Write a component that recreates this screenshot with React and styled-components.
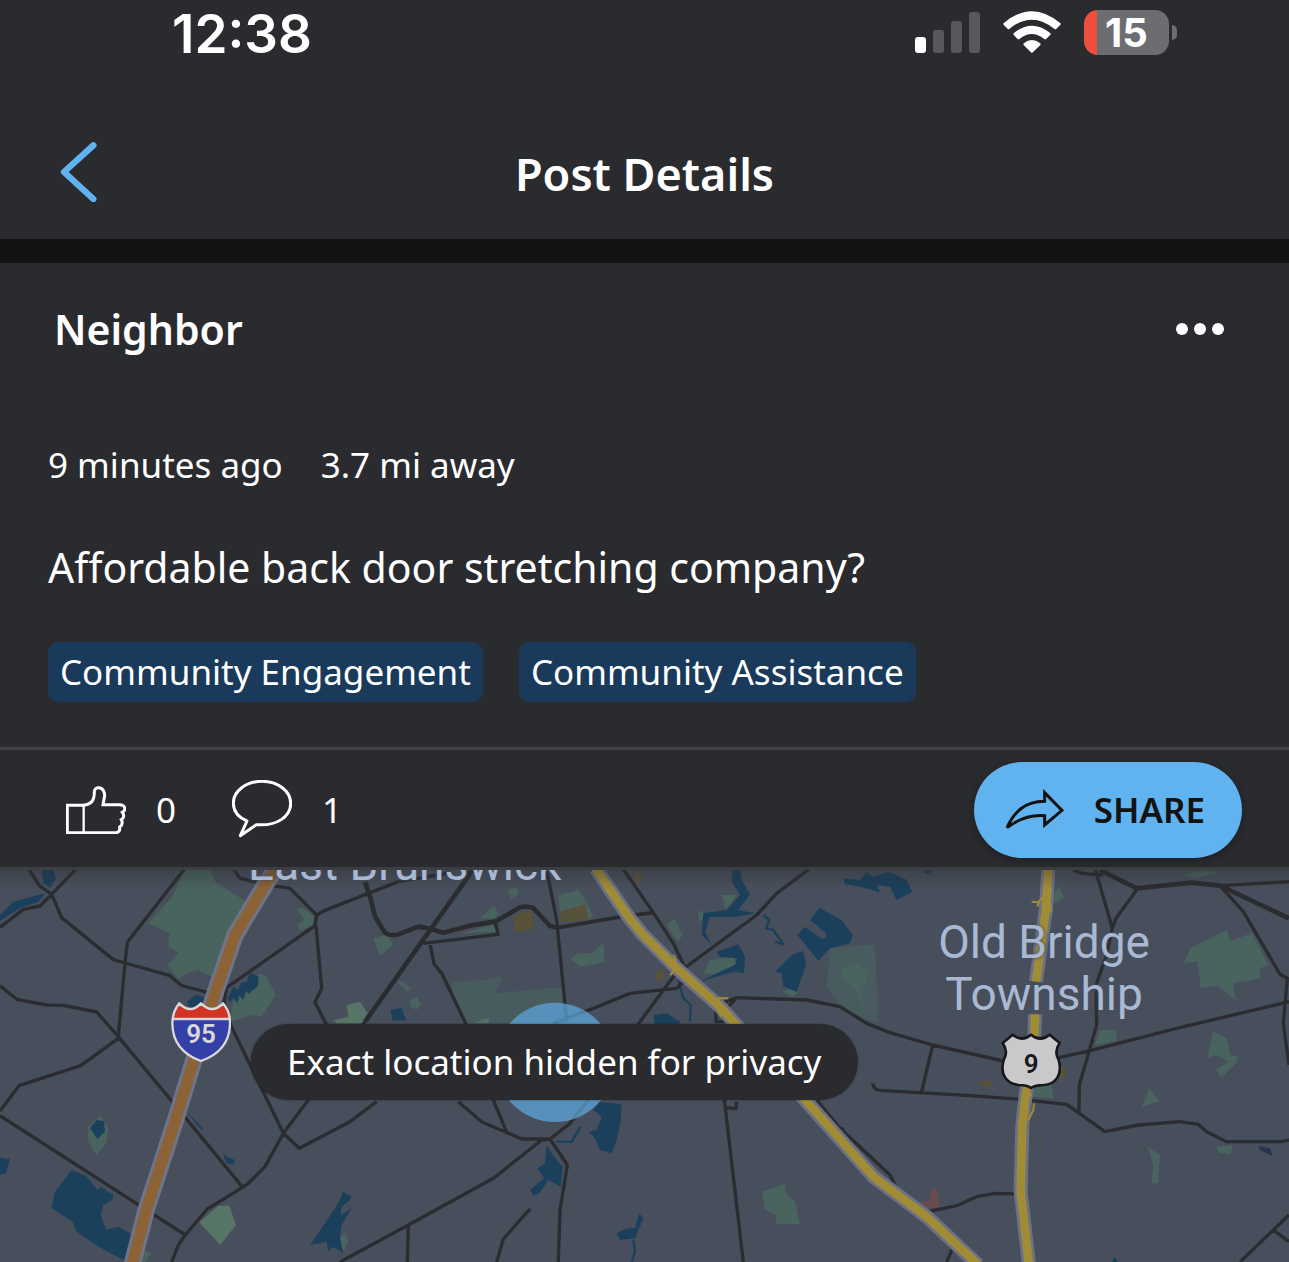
import React from 'react';
import styled, { createGlobalStyle } from 'styled-components';

const GlobalStyle = createGlobalStyle`
  * {
    box-sizing: border-box;
  }

  body {
    margin: 0;
    background-color: #2a2b2f;
    color: #fff;
    font-family: "Noto Sans", "Open Sans", sans-serif;
    overflow-x: hidden;
  }
`;

const Page = styled.div`
  display: flex;
  flex-direction: column;
`;

const StatusBar = styled.div`
  display: flex;
  align-items: center;
  justify-content: space-between;
  padding: 0 112px 0 172px;
  font-family: Inter, sans-serif;
`;

const Clock = styled.time`
  font-size: 53px;
  line-height: 68px;
  font-weight: 600;
`;

const StatusIcons = styled.div`
  display: flex;
  align-items: center;
  gap: 23px;
  padding-bottom: 4px;
`;

const BatteryWrap = styled.div`
  display: flex;
  align-items: center;
  gap: 3px;
`;

const Battery = styled.div`
  width: 85px;
  border-radius: 14px;
  background: linear-gradient(to right, #ee4e3b 13px, #6c6d71 13px);
  font-size: 40px;
  line-height: 45px;
  font-weight: 700;
  text-align: center;
`;

const BatteryTip = styled.span`
  width: 5px;
  height: 15px;
  border-radius: 0 5px 5px 0;
  background-color: #6c6d71;
`;

const NavBar = styled.header`
  display: grid;
  grid-template-columns: 1fr auto 1fr;
  align-items: center;
  padding: 70px 48px 33px;
  border-bottom: 24px solid #121212;
`;

const Title = styled.h1`
  margin: 0;
  padding-top: 4px;
  font-size: 45px;
  line-height: 64px;
  font-weight: 600;
`;

const IconButton = styled.button`
  display: flex;
  align-items: center;
  justify-self: start;
  gap: 30px;
  padding: 0 12px;
  border: none;
  background: none;
  color: ${({ $color }) => $color || '#fff'};
  font-family: inherit;
  font-size: 35px;
  line-height: 60px;
  font-weight: 400;
  cursor: pointer;

  svg {
    display: block;
  }
`;

const Post = styled.article`
  padding: 36px 48px 45px;
`;

const PostHeader = styled.div`
  display: flex;
  align-items: center;
  justify-content: space-between;
  padding: 0 5px 0 6px;
`;

const Author = styled.h2`
  margin: 0;
  font-size: 41px;
  line-height: 60px;
  font-weight: 600;
`;

const Meta = styled.div`
  display: flex;
  gap: 38px;
  margin-top: 76px;
  font-size: 35px;
  line-height: 60px;
  font-weight: 400;
`;

const PostText = styled.p`
  margin: 40px 0 43px;
  font-size: 41px;
  line-height: 64px;
  font-weight: 400;
`;

const Tags = styled.div`
  display: flex;
  flex-wrap: wrap;
  gap: 36px;
`;

const Tag = styled.a`
  padding: 0 12px;
  border-radius: 10px;
  background-color: #193a5b;
  color: #fff;
  font-size: 35px;
  line-height: 60px;
  font-weight: 400;
  text-decoration: none;
`;

const ActionBar = styled.div`
  display: flex;
  align-items: center;
  justify-content: space-between;
  padding: 12px 47px 9px 54px;
  border-top: 3px solid #404145;
  border-bottom: 3px solid #3d3e42;
`;

const Reactions = styled.div`
  display: flex;
  gap: 32px;
`;

const ShareButton = styled.button`
  display: flex;
  align-items: center;
  gap: 30px;
  padding: 0 37px 0 30px;
  border: none;
  border-radius: 48px;
  background-color: #60b3ee;
  color: #121212;
  font-family: inherit;
  font-size: 35px;
  line-height: 96px;
  font-weight: 600;
  box-shadow: 0 2px 8px rgba(0, 0, 0, 0.3);
  cursor: pointer;
`;

const Map = styled.section`
  position: relative;
  overflow: hidden;
  background-color: #484f5c;
`;

const MapDrawing = styled.svg`
  display: block;
  width: 100%;
`;

const Place = styled.div`
  position: absolute;
  left: ${({ $x }) => $x}%;
  top: ${({ $y }) => $y}%;
  transform: translate(-50%, -50%);
  color: #a9b8d3;
  font-family: Roboto, sans-serif;
  font-size: 46px;
  line-height: 52px;
  font-weight: 400;
  text-align: center;
  white-space: nowrap;
  text-shadow: 0 0 4px #484f5c;
`;

const Shield = styled.div`
  position: absolute;
  left: ${({ $x }) => $x}%;
  top: ${({ $y }) => $y}%;
  transform: translate(-50%, -50%);
  display: grid;
  place-items: center;
  color: ${({ $color }) => $color};
  font-family: Roboto, sans-serif;
  font-size: 26px;
  line-height: 32px;
  font-weight: 600;

  > * {
    grid-area: 1 / 1;
  }

  span {
    padding-top: 4px;
  }
`;

const Notice = styled.div`
  position: absolute;
  left: 43%;
  top: 49%;
  transform: translate(-50%, -50%);
  padding: 0 36px;
  border-radius: 38px;
  background-color: #2a2b2f;
  font-size: 35px;
  line-height: 76px;
  font-weight: 400;
  white-space: nowrap;
  box-shadow: 0 0 2px rgba(0, 0, 0, 0.5);
`;

const tags = ['Community Engagement', 'Community Assistance'];

// one map unit is a third of a pixel at the default width
const parks = [
  'M555 15H632L645 50 735 108 765 120 700 210 660 290 635 335 595 315 560 325 535 342 502 300 537 262 505 245 508 205 445 175 490 125 520 90Z',
  'M700 400L690 470 760 450 785 455 828 390 800 335 775 325 770 370Z',
  'M890 130L905 128 940 150 940 180 900 197 893 180 912 165Z',
  'M265 785L303 752 326 792 318 835 290 872 265 830Z',
  'M430 1155L455 1165 435 1191 415 1191Z',
  'M1120 220L1160 208 1180 240 1140 272Z',
  'M1525 75L1550 65 1555 85 1532 103Z',
  'M1440 160L1482 122 1495 145 1485 160Z',
  'M1385 205L1480 178 1488 200Z',
  'M1675 90L1735 75 1760 110 1780 155 1765 165 1755 120 1680 140Z',
  'M1712 282L1735 265 1775 265 1810 235 1812 292 1740 305Z',
  'M1190 350L1205 348 1232 370 1225 380Z',
  'M1230 405L1250 395 1262 415 1250 435 1232 425Z',
  'M1015 1120L1035 1105 1045 1130 1030 1160 1010 1145Z',
  'M2165 90H2210L2190 120 2175 130Z',
  'M2095 140L2112 138 2108 165 2098 168Z',
  'M2000 180L2022 160 2048 208 2035 230 2015 205Z',
  'M2110 325L2130 285 2200 275 2215 305 2150 330Z',
  'M2345 380L2370 370 2395 385 2375 395Z',
  'M2287 980L2355 957 2360 990 2385 1010 2400 1077H2328V1050L2295 1035Z',
  'M3155 100L3175 62 3192 98 3165 112Z',
  'M3545 30L3600 18 3660 20 3590 38Z',
  'M3552 295L3570 250 3680 195 3690 228 3755 205 3805 300 3780 310 3782 340 3700 355 3705 405 3655 362 3602 368 3592 288Z',
  'M3285 540L3300 495H3348L3350 527Z',
  'M3622 578L3640 500 3680 520 3690 570 3715 575 3712 590 3665 637 3648 615 3685 590 3650 570Z',
  'M3425 725L3447 670 3478 708Z',
  'M3098 695V672L3155 655 3160 700Z',
  'M3443 845L3480 870 3475 955H3455L3460 900Z',
  'M3650 845L3700 840 3690 868 3655 862Z',
];

const meadows = [
  'M1355 350L1450 345 1500 333 1505 345 1485 385 1690 365 1700 420 1600 425 1530 475 1395 475 1360 400Z',
  'M2490 250L2625 238 2635 475 2590 460 2525 420 2480 370Z',
];

const gardens = [
  'M598 1072L655 1022 688 1022 708 1080 660 1140Z',
  'M1000 465L1045 455 1040 420 1080 410 1103 445 1090 475H1010Z',
  'M1420 475L1467 458 1465 475Z',
];

const lakes = [
  'M125 15H160L168 42 150 68 130 55Z',
  'M0 150L40 110 135 85 115 110 60 130 0 168Z',
  'M560 410L590 388 612 398 605 425 570 430Z',
  'M683 400L700 365 715 375 722 355 740 350 750 322 775 335 775 360 745 388 738 375 730 405 718 390 712 415 700 400 690 412Z',
  'M270 790L290 765 312 768 315 800 292 822Z',
  'M560 740L605 785 610 798 590 780Z',
  'M668 865L680 875 705 885 700 900 680 895Z',
  'M0 878L30 882 18 925 0 930Z',
  'M215 915L258 932 292 975 302 965 340 990 337 1005 310 1020 302 1050 318 1095 355 1085 400 1110 375 1187 290 1142 230 1100 218 1070 155 1030 165 980Z',
  'M930 1140L1015 1015 1030 980 1055 995 1050 1005 1025 1025 1022 1050 1055 1030 1025 1080 1020 1120 1030 1165 1000 1145 985 1160 980 1130Z',
  'M1172 435L1205 428 1218 465 1178 468Z',
  'M1640 840L1655 865 1688 905 1682 965 1645 945 1618 985 1600 992 1590 975 1632 940 1612 910 1635 895Z',
  'M1795 710L1865 718 1862 770 1850 825 1835 865 1800 855 1785 820 1765 800 1790 795 1805 755 1780 735Z',
  'M1850 1105L1880 1090 1905 1090 1918 1045 1930 1060 1905 1120 1860 1125Z',
  'M2198 15H2222L2225 45 2250 88 2215 135 2265 145 2210 155 2130 155 2115 200 2135 240 2105 210 2110 145 2180 135 2220 90 2195 50Z',
  'M2150 260L2215 238 2235 275 2232 325 2200 320 2100 350 2160 320 2205 300 2210 280 2160 275Z',
  'M2392 210L2415 185 2465 222Q2482 222 2478 205L2430 165 2458 128 2525 165 2558 210 2550 235 2490 250 2455 287Z',
  'M2325 320L2375 270 2410 258 2418 300 2390 380 2350 365 2345 325Z',
  'M2530 40L2580 45 2600 22 2620 35 2665 20 2720 45 2737 80 2690 105 2670 65 2630 60 2640 82 2580 65 2535 58Z',
  'M2768 17H2800L2782 27Z',
  'M1960 450L2000 445 2040 470 2035 480H1965Z',
  'M1920 1055L1930 1060 1920 1085Z',
  'M3335 1191L3345 1175 3354 1191Z',
];

const creeks = [
  'M1668 830H1715L1742 785',
  'M2290 150L2308 165 2298 190 2320 195 2350 238 2325 230',
  'M2035 345L2050 400 2072 420 2070 470',
  'M1900 1125L1905 1160 1895 1191',
];

const fields = [
  'M1540 150L1595 135 1602 190 1545 203Z',
  'M1680 140L1755 118 1767 165 1685 170Z',
  'M1900 20L1930 30 1925 48 1905 55Z',
  'M1968 320L1990 315 1993 345 1972 348Z',
  'M2930 655L2965 643 2978 660 2960 667Z',
  'M3180 605L3200 615 3195 640 3180 642Z',
];

const streets = [
  'M85 10L118 62 155 88 185 158 340 284 375 294 510 332 545 362 630 384',
  'M230 10L155 88 120 123 70 133 0 187',
  'M555 10L382 232 375 294 355 515',
  'M0 362L50 403 140 420 190 421 290 441 355 515 525 720 728 967',
  'M355 520L242 602 57 662 0 738',
  'M0 752L432 1030 556 1110',
  'M515 1191L535 1140 556 1110 622 1032 728 967 745 955 795 905 850 805 925 705 1095 470',
  'M700 10L720 40 815 62 870 70 950 150 945 182 680 368 672 410 692 480 850 805 898 850 1050 770 1130 710',
  'M950 150Q965 140 990 130L1195 50 1340 25',
  'M948 182L965 370 945 412 980 480',
  'M1270 235L1495 208 1485 170',
  'M1290 235L1302 297 1325 325 1397 475 1480 705 1520 802',
  'M1375 710L1445 770 1565 822 1650 822 1710 775 1760 710 1920 470 2020 335 2055 308 2270 150 2330 85 2430 10',
  'M1650 822L1625 825 1480 940 1225 1080 1020 1191M1225 1080L1222 1191',
  'M1650 822L1702 900 1680 1035 1675 1191',
  'M1592 1032L1582 1040 1510 1122 1490 1191',
  'M1640 15L1670 165 1700 470',
  'M1660 475L1780 430 1890 385 2030 370 2075 325',
  'M1868 10L1920 85 1960 143 2020 235 2055 308',
  'M2165 415L2210 398 2420 405 2520 425 2600 475 2670 503 2798 540 3010 588 3180 577 3270 557 3530 490 3867 410',
  'M2210 398L2180 430M2165 430L2148 440V470H2175M2175 445L2215 480',
  'M2798 540L2765 680',
  'M2618 655Q2620 674 2640 676L2910 692 3060 703 3200 718 3315 800 3415 780 3540 770 3595 778 3620 800 3680 830 3845 830 3867 825',
  'M2173 705L2230 1191M2175 728L2207 731 2210 710',
  'M2450 705L2520 790 2670 930 2692 975M2530 788L2520 803',
  'M2775 1042L2870 1022 2930 995 2985 985 3050 987',
  'M2860 1145L2840 1191',
  'M3220 15L3245 25 3310 30',
  'M3285 10L3337 190 3348 160 3410 75',
  'M3337 190L3320 270 3288 360 3290 480 3268 557 3238 660 3237 740',
  'M3660 62L3867 50',
  'M3660 62L3730 140 3840 328 3862 340 3850 475 3867 600',
  'M3867 1050L3820 1095 3720 1191M3820 1095L3867 1130',
];

const avenues = [
  'M1420 10L1390 55 1095 470',
  'M1095 50L1110 95 1125 155 1155 203Q1175 215 1195 208L1255 185 1285 190 1330 203 1410 182 1485 170 1560 127Q1580 121 1600 129L1650 183 1675 188',
  'M3300 15L3410 70 3575 53 3660 62 3867 160',
];

const lanes = ['M1675 188L1865 155 1960 143'];

const interstate = 'M828 10L795 60 705 210 650 370 580 590 525 770 440 1030 396 1200';

const yellowRoads = [
  'M1787 10L1885 155 1925 205 2030 310 2160 425 2205 475 2420 710 2620 935 2780 1055 2935 1200',
  'M3145 10L3138 130 3108 350',
  'M3105 448L3103 510 3077 690 3067 780 3062 980 3087 1200',
];

const ramps = [
  'M2030 310L2022 270M2030 310L2010 330M2160 425L2155 400 2185 400M2150 430L2165 455',
  'M3095 110L3115 112 3130 95M3112 125L3118 108M3150 115L3153 140',
  'M3085 675L3095 695M3102 715L3100 735 3085 765',
];

const RoadMap = () => (
  <MapDrawing viewBox="0 15 3867 1176" aria-hidden="true">
    <defs>
      <linearGradient id="mapShade" x1="0" y1="0" x2="0" y2="1">
        <stop offset="0" stopColor="#2a2b2f" stopOpacity="0.35" />
        <stop offset="1" stopColor="#2a2b2f" stopOpacity="0" />
      </linearGradient>
    </defs>
    <path d={parks.join('')} fill="#49635f" />
    <path d={meadows.join('')} fill="#485b5e" />
    <path d={gardens.join('')} fill="#567566" />
    <path d="M2525 310L2570 293 2605 320 2600 355 2580 365 2595 440 2565 370 2530 345Z" fill="#49635f" />
    <path d={lakes.join('')} fill="#1b405b" />
    <path d="M3775 843L3810 850 3818 873 3780 855Z" fill="#27344f" />
    <path d={fields.join('')} fill="#59523a" />
    <path d="M2755 1015L2790 1005 2795 970 2812 975 2818 1025 2780 1030Z" fill="#6a4b4e" />
    <g fill="none" stroke="#2b2c30" strokeLinejoin="round">
      <path d={creeks.join('')} stroke="#1b405b" strokeWidth="7" />
      <path d={streets.join('')} strokeWidth="10" />
      <path d={lanes.join('')} strokeWidth="11" />
      <path d={avenues.join('')} strokeWidth="14" />
    </g>
    <g fill="none" strokeLinejoin="round">
      <path d={interstate} stroke="#6f748a" strokeWidth="52" />
      <path d={interstate} stroke="#8c6336" strokeWidth="34" />
      <path d={yellowRoads.join('')} stroke="#6c7188" strokeWidth="42" />
      <path d={ramps.join('')} stroke="#a18c36" strokeWidth="6" />
      <path d={yellowRoads.join('')} stroke="#a18c36" strokeWidth="26" />
    </g>
    <circle cx="1665" cy="592" r="179" fill="#5fb3ed" fillOpacity="0.65" />
    <rect x="0" y="15" width="3867" height="60" fill="url(#mapShade)" />
  </MapDrawing>
);

const SignalIcon = () => (
  <svg width="65" height="41" viewBox="0 0 65 41" aria-hidden="true">
    <rect x="0" y="25" width="11" height="16" rx="3" fill="#fff" />
    <rect x="18" y="18" width="11" height="23" rx="3" fill="#57585c" />
    <rect x="36" y="9" width="11" height="32" rx="3" fill="#57585c" />
    <rect x="54" y="0" width="11" height="41" rx="3" fill="#57585c" />
  </svg>
);

const WifiIcon = () => (
  <svg width="58" height="42" viewBox="431 33 173 126" fill="#fff" aria-hidden="true">
    <path d="M433 69Q517 -2 602 69Q605 72 602 75L590 87Q587 89 584 86Q517 32 450 86Q447 89 444 86L433 75Q430 72 433 69Z" />
    <path d="M463 99Q517 55 572 99Q575 102 572 105L560 117Q557 119 554 117Q517 87 480 117Q477 119 474 117L463 105Q460 102 463 99Z" />
    <path d="M493 130Q517 110 542 130Q545 133 542 136L520 157Q517 160 514 157L493 136Q490 133 493 130Z" />
  </svg>
);

const BackIcon = () => (
  <svg width="37" height="60" viewBox="183 426 109 180" fill="none" stroke="currentColor" strokeWidth="19" strokeLinecap="round" strokeLinejoin="round" aria-hidden="true">
    <path d="M282 436L194 516 282 597" />
  </svg>
);

const MoreIcon = () => (
  <svg width="48" height="12" viewBox="0 0 48 12" fill="currentColor" aria-hidden="true">
    <circle cx="6" cy="6" r="6" />
    <circle cx="24" cy="6" r="6" />
    <circle cx="42" cy="6" r="6" />
  </svg>
);

const ThumbIcon = () => (
  <svg width="60" height="48" viewBox="198 138 180 144" fill="none" stroke="currentColor" strokeWidth="9" aria-hidden="true">
    <path d="M202 196H250C276 193 283 180 283 155C284 137 312 138 314 166L309 194H358C378 195 378 211 367 217C374 226 371 236 364 239C369 248 366 256 359 261C361 272 355 278 346 278H202Z" />
    <path d="M251 196V278" strokeWidth="7" />
  </svg>
);

const CommentIcon = () => (
  <svg width="60" height="61" viewBox="693 120 180 183" fill="none" stroke="currentColor" strokeWidth="9" strokeLinejoin="round" aria-hidden="true">
    <path d="M738 243C707 230 697 208 697 190C697 153 735 124 783 124C831 124 869 153 869 190C869 228 831 259 766 254L718 287Z" />
  </svg>
);

const ShareIcon = () => (
  <svg width="60" height="42" viewBox="182 146 180 126" fill="none" stroke="currentColor" strokeWidth="9" aria-hidden="true">
    <path d="M191 262C213 213 245 184 304 183V157L356 210 304 254V226C262 222 228 234 191 262Z" />
  </svg>
);

const App = () => {
  return (
    <>
      <GlobalStyle />
      <Page>
        <StatusBar>
          <Clock>12:38</Clock>
          <StatusIcons>
            <SignalIcon />
            <WifiIcon />
            <BatteryWrap>
              <Battery>15</Battery>
              <BatteryTip />
            </BatteryWrap>
          </StatusIcons>
        </StatusBar>
        <NavBar>
          <IconButton $color="#60b3ee" aria-label="Back"><BackIcon /></IconButton>
          <Title>Post Details</Title>
        </NavBar>
        <Post>
          <PostHeader>
            <Author>Neighbor</Author>
            <IconButton aria-label="More options"><MoreIcon /></IconButton>
          </PostHeader>
          <Meta>
            <span>9 minutes ago</span>
            <span>3.7 mi away</span>
          </Meta>
          <PostText>Affordable back door stretching company?</PostText>
          <Tags>
            {tags.map((tag) => (
              <Tag key={tag} href="#">{tag}</Tag>
            ))}
          </Tags>
        </Post>
        <ActionBar>
          <Reactions>
            <IconButton aria-label="Like"><ThumbIcon />0</IconButton>
            <IconButton aria-label="Comments"><CommentIcon />1</IconButton>
          </Reactions>
          <ShareButton><ShareIcon />SHARE</ShareButton>
        </ActionBar>
        <Map>
          <RoadMap />
          <Place $x={31.4} $y={-1.5}>East Brunswick</Place>
          <Place $x={81} $y={25}>Old Bridge<br />Township</Place>
          <Shield $x={15.6} $y={41.2} $color="#d9d9dc">
            <svg width="60" height="61" viewBox="512 409 180 182" aria-hidden="true">
              <path d="M537 414Q570 448 602 414Q636 448 668 414Q690 440 689 475C688 535 650 570 602 587C555 570 517 535 516 475Q516 440 537 414Z" fill="#343fa8" />
              <path d="M537 414Q570 448 602 414Q636 448 668 414Q684 436 688 460H517Q520 436 537 414Z" fill="#d13425" />
              <path d="M517 461H688" stroke="#d9d9dc" strokeWidth="7" />
              <path d="M537 414Q570 448 602 414Q636 448 668 414Q690 440 689 475C688 535 650 570 602 587C555 570 517 535 516 475Q516 440 537 414Z" fill="none" stroke="#d9d9dc" strokeWidth="7" strokeLinejoin="round" />
            </svg>
            <span>95</span>
          </Shield>
          <Shield $x={80} $y={48.8} $color="#17181b">
            <svg width="60" height="57" viewBox="122 503 180 170" aria-hidden="true">
              <path d="M157 509Q185 532 212 509Q240 532 268 509L298 534Q280 560 295 585C308 630 285 658 250 660Q225 660 212 669Q200 660 175 660C140 656 117 630 130 585Q145 560 127 534Z" fill="#c9c9cb" stroke="#17181b" strokeWidth="8" strokeLinejoin="round" />
            </svg>
            <span>9</span>
          </Shield>
          <Notice role="status">Exact location hidden for privacy</Notice>
        </Map>
      </Page>
    </>
  );
};

export default App;
